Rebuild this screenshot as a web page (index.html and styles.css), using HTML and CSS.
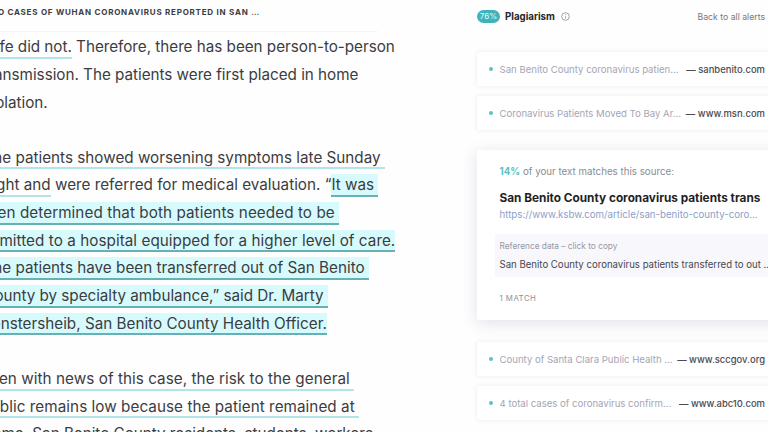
FILE: index.html
```html
<!DOCTYPE html>
<html lang="en">
<head>
<meta charset="utf-8">
<title>Plagiarism report</title>
<link rel="stylesheet" href="styles.css">
</head>
<body>
<div class="app">
  <main class="editor">
    <h1 class="doc-title">Two cases of Wuhan coronavirus reported in San …</h1>
    <div class="rule"></div>
    <div class="text">
      <div class="line snug"><span class="match">wife did not.</span> Therefore, there has been person-to-person</div>
      <div class="line snug">transmission. The patients were first placed in home</div>
      <div class="line">isolation.</div>
      <div class="line"></div>
      <div class="line"><span class="match">The patients showed worsening symptoms late Sunday </span></div>
      <div class="line"><span class="match">night and</span> were referred for medical evaluation. “<span class="match active">It was </span></div>
      <div class="line loose"><span class="match active">then determined that both patients needed to be </span></div>
      <div class="line wide"><span class="match active">admitted to a hospital equipped for a higher level of care.</span></div>
      <div class="line"><span class="match active">The patients have been transferred out of San Benito </span></div>
      <div class="line tight"><span class="match active">County by specialty ambulance,” said Dr. Marty </span></div>
      <div class="line"><span class="match active">Fenstersheib, San Benito County Health Officer.</span></div>
      <div class="line"></div>
      <div class="line wide"><span class="match">Even with news of this case, the risk to the general </span></div>
      <div class="line wide"><span class="match">public remains low because the patient remained at </span></div>
      <div class="line snug">home. San Benito County residents, students, workers</div>
    </div>
  </main>
  <aside class="panel">
    <header class="panel-head">
      <span class="badge">76%</span>
      <h2 class="panel-title">Plagiarism</h2>
      <svg class="info" viewBox="0 0 9 9"><circle cx="4.5" cy="4.5" r="3.8"/><path d="M4.5 4.2v2.3M4.5 2.4v.8"/></svg>
      <a class="back">Back to all alerts</a>
    </header>
    <div class="source"><i class="dot"></i><span class="name">San Benito County coronavirus patien…</span><span class="site">— sanbenito.com</span></div>
    <div class="source"><i class="dot"></i><span class="name">Coronavirus Patients Moved To Bay Ar…</span><span class="site">— www.msn.com</span></div>
    <section class="card">
      <p class="share"><b>14%</b> of your text matches this source:</p>
      <h3 class="card-title">San Benito County coronavirus patients trans</h3>
      <a class="url">https://www.ksbw.com/article/san-benito-county-coro…</a>
      <div class="reference">
        <p class="ref-label">Reference data – click to copy</p>
        <p class="ref-text">San Benito County coronavirus patients transferred to out …</p>
      </div>
      <p class="count">1 MATCH</p>
    </section>
    <div class="source"><i class="dot"></i><span class="name">County of Santa Clara Public Health …</span><span class="site">— www.sccgov.org</span></div>
    <div class="source"><i class="dot"></i><span class="name">4 total cases of coronavirus confirm…</span><span class="site">— www.abc10.com</span></div>
  </aside>
</div>
</body>
</html>
```
FILE: styles.css
```css
* { box-sizing: border-box; margin: 0; padding: 0; }
body { width: 768px; height: 432px; overflow: hidden; background: #fefefe; font-family: Inter, "Liberation Sans", sans-serif; color: #3c3c42; }
.app { display: flex; height: 432px; overflow: hidden; }
.editor { flex: 0 0 477px; margin-left: -17px; margin-right: 17px; }
.doc-title { height: 24px; line-height: 24px; font-size: 8px; font-weight: 700; letter-spacing: .76px; text-transform: uppercase; white-space: pre; }
.rule { width: 395px; height: 1px; margin-top: 7px; background: #edf9fa; }
.text { margin-top: 1.2px; padding-left: .4px; font-size: 15.25px; }
.line { height: 27.66px; line-height: 27.66px; white-space: pre; }
.snug { letter-spacing: -.025px; }
.loose { letter-spacing: .065px; }
.wide { margin-left: -2px; letter-spacing: .05px; }
.tight { letter-spacing: -.04px; }
.match { display: inline-block; height: 22.6px; line-height: 21.6px; border-bottom: 2px solid #b3e4ea; }
.active { background: #d7fbfd; border-bottom-color: #64b2b7; }
.panel { flex: 0 0 308px; width: 308px; }
.panel-head { display: flex; align-items: center; height: 33px; margin-bottom: 19px; padding-right: 20px; }
.badge { width: 23px; height: 13px; line-height: 13px; border-radius: 7px; background: #3fb3bb; color: #d9f8f8; font-size: 8px; font-weight: 500; text-align: center; }
.panel-title { margin-left: 5px; font-size: 9.7px; font-weight: 700; color: #26262b; }
.info { width: 9px; height: 9px; margin-left: 6px; fill: none; stroke: #8b8b92; stroke-width: .8; }
.back { margin-left: auto; font-size: 8.7px; color: #77777d; white-space: nowrap; }
.source { display: flex; align-items: center; width: 310px; height: 34px; margin-bottom: 10px; padding: 0 22px 0 12px; border-radius: 2px; background: #fff; box-shadow: 0 0 4px rgba(60, 60, 100, .1); font-size: 9.58px; white-space: nowrap; }
.dot { width: 4px; height: 4px; margin-right: 6.5px; border-radius: 50%; background: #5cc2be; }
.name { color: #a5a5b5; }
.site { margin-left: auto; color: #4b4b51; font-size: 9.45px; font-weight: 500; }
.card { width: 310px; height: 170px; margin: 20px 0 22px; padding: 15px 0 0 22.5px; border-radius: 3px; background: #fff; box-shadow: 0 3px 16px rgba(70, 75, 140, .16); white-space: nowrap; }
.share { height: 14px; line-height: 14px; font-size: 9.75px; color: #8b8b91; }
.share b { color: #57c3c0; font-weight: 700; }
.card-title { height: 18px; margin-top: 10px; line-height: 18px; font-size: 11.8px; font-weight: 700; color: #1f1f25; }
.url { display: block; height: 16px; line-height: 16px; font-size: 9.7px; color: #8b9fc8; }
.reference { height: 43px; margin: 11px 0 0 -5px; padding: 6px 0 0 5px; background: #f7f7fc; }
.ref-label { height: 12px; line-height: 12px; font-size: 8.3px; color: #98989f; }
.ref-text { height: 15px; margin-top: 5px; line-height: 15px; font-size: 9.62px; color: #47474f; }
.count { margin-top: 15px; line-height: 12px; font-size: 7.8px; letter-spacing: .5px; color: #909098; }
```
